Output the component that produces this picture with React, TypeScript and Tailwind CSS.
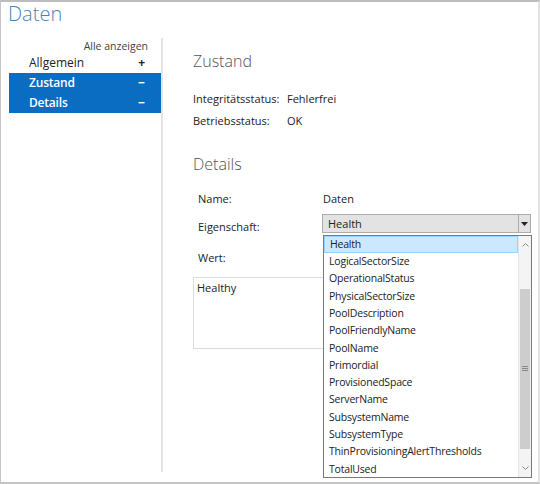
const FONT = { fontFamily: '"Open Sans", "Noto Sans", sans-serif' };

const PROPS = [
  "Health",
  "LogicalSectorSize",
  "OperationalStatus",
  "PhysicalSectorSize",
  "PoolDescription",
  "PoolFriendlyName",
  "PoolName",
  "Primordial",
  "ProvisionedSpace",
  "ServerName",
  "SubsystemName",
  "SubsystemType",
  "ThinProvisioningAlertThresholds",
  "TotalUsed",
];

function NavRow({ label, sign, active }: { label: string; sign: string; active?: boolean }) {
  return (
    <div
      className={
        "flex h-[20px] items-center justify-between pl-[20px] pr-[16px] text-[12px] " +
        (active ? "bg-[#0b6dc1] font-semibold tracking-[-0.2px] text-white" : "text-[#222]")
      }
    >
      <span>{label}</span>
      <span className="font-bold">{sign}</span>
    </div>
  );
}

function Dropdown() {
  return (
    <div className="absolute left-[322px] top-[233px] flex h-[243px] w-[209px] border border-[#7a7a7a] bg-white text-[10.5px] tracking-[-0.2px] text-[#222]">
      <div className="flex-1">
        {PROPS.map((p, i) => (
          <div
            key={p}
            className={
              "flex h-[17.3px] items-center px-[5px] " +
              (i === 0 ? "border border-[#99d1ff] bg-[#cce8ff] px-[4px]" : "")
            }
          >
            {p}
          </div>
        ))}
      </div>
      <div className="flex w-[13px] flex-col border-l border-[#e6e6e6] bg-[#f4f4f4]">
        <div className="flex h-[18px] items-center justify-center text-[#8a8a8a]">
          <svg width="7" height="4" viewBox="0 0 7 4">
            <path d="M0.5 3.5L3.5 0.5L6.5 3.5" fill="none" stroke="currentColor" strokeWidth="1" />
          </svg>
        </div>
        <div className="h-[35px]" />
        <div className="mx-px flex h-[160px] items-center justify-center bg-[#cdcdcd]">
          <svg width="6" height="6" viewBox="0 0 6 6">
            <path d="M0 0.5H6M0 2.5H6M0 4.5H6" stroke="#888" strokeWidth="1" />
          </svg>
        </div>
        <div className="flex-1" />
        <div className="flex h-[18px] items-center justify-center text-[#8a8a8a]">
          <svg width="7" height="4" viewBox="0 0 7 4">
            <path d="M0.5 0.5L3.5 3.5L6.5 0.5" fill="none" stroke="currentColor" strokeWidth="1" />
          </svg>
        </div>
      </div>
    </div>
  );
}

export default function App() {
  return (
    <div
      style={FONT}
      className="relative h-[484px] w-[540px] overflow-hidden border-t-2 border-l border-r-2 border-b-2 border-t-[#bdbdbd] border-l-[#c4c4c4] border-r-[#e2e2e2] border-b-[#c4c4c4] bg-white"
    >
      <h1 className="pl-[7px] text-[20px] font-light leading-[24px] text-[#4a86b8]">Daten</h1>

      <div className="mt-[12px] flex">
        {/* left nav */}
        <div className="ml-[8px] w-[152px] pt-px">
          <div className="pr-[13px] text-right text-[10.5px] leading-[14px] text-[#444]">Alle anzeigen</div>
          <NavRow label="Allgemein" sign="+" />
          <NavRow label="Zustand" sign="−" active />
          <NavRow label="Details" sign="−" active />
        </div>

        <div className="h-[434px] w-[2px] bg-[#e4e4e4]" />

        {/* content */}
        <div className="flex flex-col pl-[30px] text-[11px] leading-[16px] text-[#222]">
          <h2 className="mt-[12px] text-[16px] font-light leading-[22px] text-[#555]">Zustand</h2>
          <div className="mt-[19px] grid grid-cols-[94px_1fr] gap-y-[6px]">
            <span>Integritätsstatus:</span>
            <span>Fehlerfrei</span>
            <span>Betriebsstatus:</span>
            <span>OK</span>
          </div>

          <h2 className="mt-[24px] text-[16px] font-light leading-[22px] text-[#555]">Details</h2>

          <div className="ml-[5px] mt-[16px] flex">
            <span className="w-[125px]">Name:</span>
            <span>Daten</span>
          </div>
          <div className="ml-[5px] mt-[7px] flex items-start">
            <span className="w-[124px] pt-[5px]">Eigenschaft:</span>
            <div className="flex h-[19px] w-[209px] border border-[#acacac] bg-[#e3e3e3]">
              <span className="flex flex-1 items-center pl-[5px]">Health</span>
              <span className="flex w-[12px] items-center justify-center border-l border-[#acacac]">
                <svg width="7" height="4" viewBox="0 0 7 4">
                  <path d="M0 0H7L3.5 4Z" fill="#222" />
                </svg>
              </span>
            </div>
          </div>
          <span className="ml-[5px] mt-[15px]">Wert:</span>

          <div className="mt-[11px] h-[72px] w-[305px] border border-[#dcdcdc] px-[3px] py-[2px]">
            Healthy
          </div>
        </div>
      </div>

      <Dropdown />
    </div>
  );
}
